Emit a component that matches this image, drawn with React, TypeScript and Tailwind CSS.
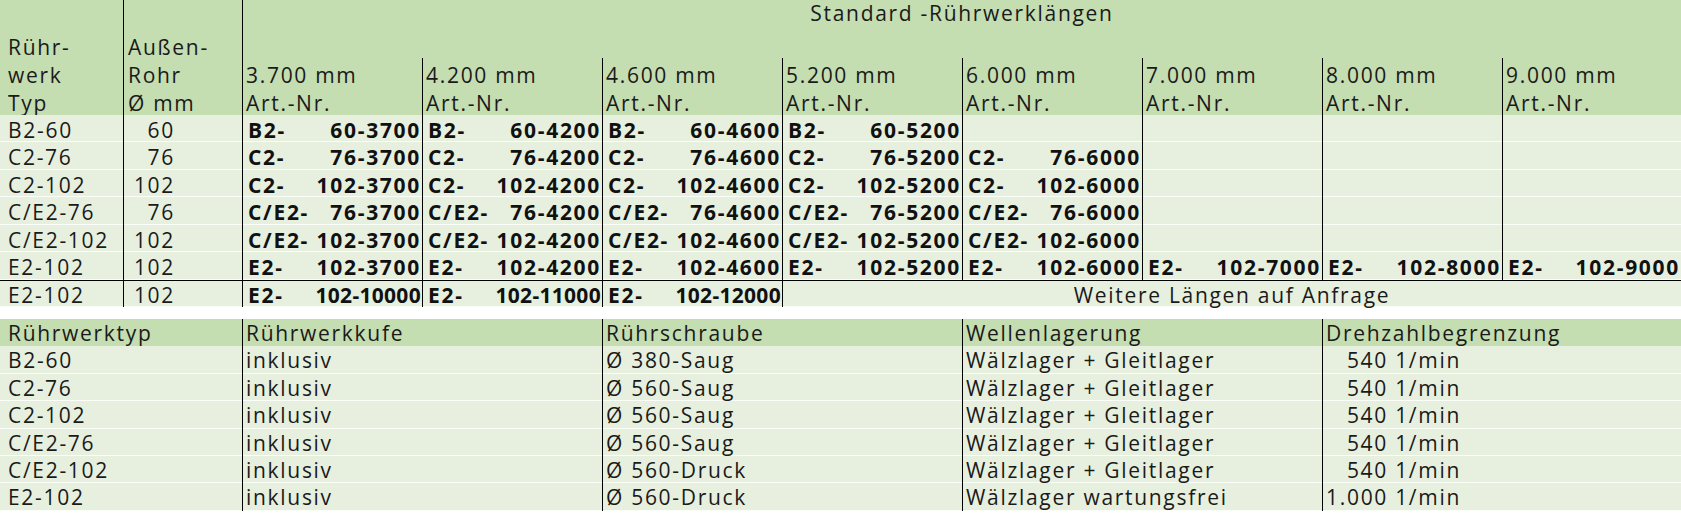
import React from "react";

const HEAD = "bg-[#c4ddb1]";
const DATA = "bg-[#e7f0df] shadow-[inset_0_-1px_0_#fbfdf9]";

type Cell = [string, string] | null;

const lengths = ["3.700", "4.200", "4.600", "5.200", "6.000", "7.000", "8.000", "9.000"];
const lenCodes = ["3700", "4200", "4600", "5200", "6000", "7000", "8000", "9000"];

function mk(prefix: string, size: string, count: number): Cell[] {
  return lenCodes.map((c, i) => (i < count ? [prefix, `${size}-${c}`] : null));
}

const rows: { typ: string; d: string; cells: Cell[] }[] = [
  { typ: "B2-60", d: "60", cells: mk("B2-", "60", 4) },
  { typ: "C2-76", d: "76", cells: mk("C2-", "76", 5) },
  { typ: "C2-102", d: "102", cells: mk("C2-", "102", 5) },
  { typ: "C/E2-76", d: "76", cells: mk("C/E2-", "76", 5) },
  { typ: "C/E2-102", d: "102", cells: mk("C/E2-", "102", 5) },
  { typ: "E2-102", d: "102", cells: mk("E2-", "102", 8) },
];

const second = [
  ["B2-60", "inklusiv", "Ø 380-Saug", "Wälzlager + Gleitlager", "540"],
  ["C2-76", "inklusiv", "Ø 560-Saug", "Wälzlager + Gleitlager", "540"],
  ["C2-102", "inklusiv", "Ø 560-Saug", "Wälzlager + Gleitlager", "540"],
  ["C/E2-76", "inklusiv", "Ø 560-Saug", "Wälzlager + Gleitlager", "540"],
  ["C/E2-102", "inklusiv", "Ø 560-Druck", "Wälzlager + Gleitlager", "540"],
  ["E2-102", "inklusiv", "Ø 560-Druck", "Wälzlager wartungsfrei", "1.000"],
];

function ArtCell({ cell, extra = "", tight = false }: { cell: Cell; extra?: string; tight?: boolean }) {
  return (
    <div className={`${DATA} border-l border-black flex justify-between pl-[5px] pr-[1px] pt-[2px] font-bold text-[#111] ${extra}`}>
      {cell ? (
        <>
          <span>{cell[0]}</span>
          <span className={tight ? "tracking-[0.3px]" : ""}>{cell[1]}</span>
        </>
      ) : null}
    </div>
  );
}

export default function App() {
  return (
    <div className="w-[1681px] h-[514px] bg-white font-['Open_Sans',sans-serif] text-[21px] tracking-[1.7px] text-[#1a1a1a] overflow-hidden">
      <div className="grid grid-cols-[123px_119px_repeat(7,180px)_179px] grid-rows-[58px_57px_repeat(7,27.43px)] leading-[27.5px]">
        <div className={`${HEAD} row-span-2 flex flex-col pt-[33px] pl-[8px] leading-[28px]`}>
          <div>Rühr-</div>
          <div>werk</div>
          <div>Typ</div>
        </div>
        <div className={`${HEAD} row-span-2 border-l border-black flex flex-col pt-[33px] pl-[4px] leading-[28px]`}>
          <div>Außen-</div>
          <div>Rohr</div>
          <div>Ø mm</div>
        </div>
        <div className={`${HEAD} col-span-8 border-l border-black text-center pt-[0px]`}>Standard -Rührwerklängen</div>
        {lengths.map((l) => (
          <div key={l} className={`${HEAD} border-l border-black flex flex-col pt-[3px] pl-[3px] leading-[28px]`}>
            <div>{l} mm</div>
            <div>Art.-Nr.</div>
          </div>
        ))}

        {rows.map((r, ri) => (
          <React.Fragment key={ri}>
            <div className={`${DATA} pl-[8px] pt-[2px]`}>{r.typ}</div>
            <div className={`${DATA} border-l border-black text-right pr-[67px] pt-[2px]`}>{r.d}</div>
            {r.cells.map((c, ci) => (
              <ArtCell key={ci} cell={c} />
            ))}
          </React.Fragment>
        ))}

        <div className={`${DATA} border-t border-black pl-[8px] pt-[1px]`}>E2-102</div>
        <div className={`${DATA} border-t border-black border-l text-right pr-[67px] pt-[1px]`}>102</div>
        <ArtCell cell={["E2-", "102-10000"]} extra="border-t !pt-[1px]" tight />
        <ArtCell cell={["E2-", "102-11000"]} extra="border-t !pt-[1px]" tight />
        <ArtCell cell={["E2-", "102-12000"]} extra="border-t !pt-[1px]" tight />
        <div className={`${DATA} col-span-5 border-t border-l border-black text-center pt-[1px]`}>Weitere Längen auf Anfrage</div>
      </div>

      <div className="h-[12px]" />

      <div className="grid grid-cols-[242px_360px_360px_360px_359px] grid-rows-[repeat(7,27.43px)] leading-[27.5px]">
        {["Rührwerktyp", "Rührwerkkufe", "Rührschraube", "Wellenlagerung", "Drehzahlbegrenzung"].map((h, i) => (
          <div key={h} className={`${HEAD} pt-[1px] ${i === 0 ? "pl-[8px]" : "border-l border-black pl-[3px]"}`}>
            {h}
          </div>
        ))}
        {second.map((r, ri) => (
          <React.Fragment key={ri}>
            <div className={`${DATA} pl-[8px] pt-[1px]`}>{r[0]}</div>
            <div className={`${DATA} border-l border-black pl-[3px] pt-[1px]`}>{r[1]}</div>
            <div className={`${DATA} border-l border-black pl-[3px] pt-[1px]`}>{r[2]}</div>
            <div className={`${DATA} border-l border-black pl-[3px] pt-[1px]`}>{r[3]}</div>
            <div className={`${DATA} border-l border-black pl-[3px] pt-[1px]`}>
              <span className="inline-block w-[62px] text-right">{r[4]}</span> 1/min
            </div>
          </React.Fragment>
        ))}
      </div>
    </div>
  );
}
